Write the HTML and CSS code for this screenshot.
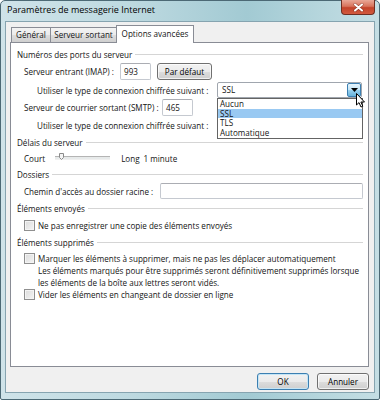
FILE: index.html
```html
<!DOCTYPE html>
<html lang="fr">
<head>
    <meta charset="UTF-8">
    <title>Paramètres de messagerie Internet</title>
    <link rel="stylesheet" href="styles.css">
</head>
<body>

<div class="window">
    <div class="titlebar">
        <span class="title">Paramètres de messagerie Internet</span>
        <div class="close">
            <svg width="11" height="9" viewBox="0 0 11 9">
                <path d="M2 1.5 L9 7.5 M9 1.5 L2 7.5" stroke="#5a1a10" stroke-width="3" stroke-linecap="round" opacity="0.5"/>
                <path d="M2 1.5 L9 7.5 M9 1.5 L2 7.5" stroke="#fff" stroke-width="2" stroke-linecap="round"/>
            </svg>
        </div>
    </div>

    <div class="client">
        <div class="tabs">
            <div class="tab tab-general">Général</div>
            <div class="tab tab-out">Serveur sortant</div>
            <div class="tab tab-adv active">Options avancées</div>
        </div>

        <div class="panel">
            <div class="group g-ports">Numéros des ports du serveur</div>

            <div class="row r-imap">
                <span class="lbl w-imap">Serveur entrant (IMAP) :</span>
                <div class="field port">993</div>
                <div class="btn btn-small">Par défaut</div>
            </div>
            <div class="row sub r-enc">
                <span class="lbl w-enc">Utiliser le type de connexion chiffrée suivant :</span>
                <div class="combo">
                    <span class="combo-text">SSL</span>
                    <span class="combo-arrow">
                        <svg width="7" height="4" viewBox="0 0 7 4"><path d="M0 0 H7 L3.5 4 Z" fill="#000"/></svg>
                    </span>
                </div>
            </div>
            <div class="row r-smtp">
                <span class="lbl w-smtp">Serveur de courrier sortant (SMTP) :</span>
                <div class="field port">465</div>
            </div>
            <div class="row sub r-enc2">
                <span class="lbl w-enc">Utiliser le type de connexion chiffrée suivant :</span>
                <div class="combo"></div>
            </div>

            <div class="group g-delay">Délais du serveur</div>
            <div class="row r-court">
                <span>Court</span>
                <div class="slider">
                    <svg class="thumb" width="5" height="7" viewBox="0 0 5 7">
                        <path d="M0.5 0.5 H4.5 V4.5 L2.5 6.5 L0.5 4.5 Z" fill="#f4f4f4" stroke="#8a8a8a"/>
                    </svg>
                </div>
                <span class="long">Long</span>
                <span class="minute">1 minute</span>
            </div>

            <div class="group g-folders">Dossiers</div>
            <div class="row r-path">
                <span class="lbl w-path">Chemin d'accès au dossier racine :</span>
                <div class="field wide"></div>
            </div>

            <div class="group g-sent">Éléments envoyés</div>
            <div class="row r-cb1">
                <span class="check"></span>
                <span>Ne pas enregistrer une copie des éléments envoyés</span>
            </div>

            <div class="group g-deleted">Éléments supprimés</div>
            <div class="row r-cb2">
                <span class="check"></span>
                <span>Marquer les éléments à supprimer, mais ne pas les déplacer automatiquement</span>
            </div>
            <p class="note">Les éléments marqués pour être supprimés seront définitivement supprimés lorsque<br>les éléments de la boîte aux lettres seront vidés.</p>
            <div class="row r-cb3">
                <span class="check"></span>
                <span>Vider les éléments en changeant de dossier en ligne</span>
            </div>

            <ul class="dropdown">
                <li>Aucun</li>
                <li class="selected">SSL</li>
                <li>TLS</li>
                <li>Automatique</li>
            </ul>

            <svg class="cursor" width="10" height="15" viewBox="0 0 10 15">
                <path d="M0.5 0.5 V12 L3 9.6 L5 14 L6.8 13.2 L4.9 9 H8.5 Z" fill="#fff" stroke="#000" stroke-width="1" stroke-linejoin="round"/>
            </svg>
        </div>

        <div class="actions">
            <div class="btn btn-default">OK</div>
            <div class="btn">Annuler</div>
        </div>
    </div>
</div>

</body>
</html>
```

FILE: styles.css
```css
body {
    margin: 0;
    font-family: "Open Sans", "Noto Sans", sans-serif;
    font-size: 8.1px;
    color: #141414;
    white-space: nowrap;
}
.window {
    width: 380px;
    height: 400px;
    box-sizing: border-box;
    border: 1px solid #4c6975;
    border-radius: 5px 5px 2px 2px;
    padding: 0 4px 6px;
    background: linear-gradient(90deg, #cfe3e9 0%, #bdd9e0 35%, #a2cad3 65%, #b6d6dd 85%, #c5dee4 100%);
    display: flex;
    flex-direction: column;
}
.titlebar {
    height: 20px;
    display: flex;
    align-items: flex-start;
    padding-left: 2px;
}
.title {
    font-size: 9px;
    color: #000;
    line-height: 14px;
    margin-top: 2px;
}
.close {
    margin-left: auto;
    margin-top: -1px;
    width: 34px;
    height: 15px;
    box-sizing: border-box;
    border: 1px solid #6e2e22;
    border-top: none;
    border-radius: 0 0 4px 4px;
    background: linear-gradient(#e9a897 0%, #d8735c 45%, #c3432a 55%, #d25a3f 100%);
    display: flex;
    align-items: center;
    justify-content: center;
}
.client {
    flex: 1;
    border: 1px solid #86a4b0;
    background: #f0f0f0;
    padding: 3px 5px 0 4px;
    display: flex;
    flex-direction: column;
}
.tabs {
    display: flex;
    align-items: flex-end;
    height: 17px;
    padding-left: 1px;
}
.tab {
    box-sizing: border-box;
    height: 15px;
    border: 1px solid #898c95;
    border-bottom: none;
    border-right: none;
    background: linear-gradient(#f3f3f3 0%, #ebebeb 50%, #dddddd 51%, #cfcfcf 100%);
    text-align: center;
    line-height: 13px;
}
.tab-general { width: 39px; }
.tab-out { width: 66px; }
.tab-adv { width: 78px; }
.tab.active {
    height: 18px;
    margin-bottom: -1px;
    background: #fff;
    border-right: 1px solid #898c95;
    line-height: 16px;
    position: relative;
    z-index: 1;
}
.panel {
    position: relative;
    height: 325px;
    box-sizing: border-box;
    border: 1px solid #898c95;
    background: #fff;
    padding: 3px 5px 0 6px;
}
.group {
    display: flex;
    align-items: center;
    height: 16px;
}
.group::after {
    content: "";
    flex: 1;
    border-top: 1px solid #d5d5d5;
    margin-left: 3px;
}
.g-folders, .g-deleted { height: 17px; }
.g-sent { height: 18px; }
.row {
    display: flex;
    align-items: center;
    padding-left: 7px;
}
.row.sub { padding-left: 20px; }
.r-imap { height: 19px; }
.r-enc, .r-enc2 { height: 18px; }
.r-smtp { height: 17px; }
.r-court { height: 16px; }
.r-path { height: 16px; }
.r-cb1 { height: 17px; }
.r-cb2 { height: 14px; }
.r-cb3 { height: 12px; }
.lbl { flex-shrink: 0; }
.w-imap { width: 96px; }
.w-enc { width: 180px; }
.w-smtp { width: 138px; }
.w-path { width: 136px; }
.field {
    box-sizing: border-box;
    height: 17px;
    border: 1px solid #c5c9d0;
    border-top-color: #abadb3;
    border-radius: 2px;
    background: #fff;
    padding-left: 3px;
    line-height: 15px;
}
.port { width: 31px; }
.wide { flex: 1; height: 16px; }
.btn {
    box-sizing: border-box;
    width: 52px;
    height: 17px;
    border: 1px solid #707070;
    border-radius: 3px;
    background: linear-gradient(#f2f2f2 0%, #ebebeb 50%, #dddddd 51%, #cfcfcf 100%);
    box-shadow: inset 0 0 0 1px rgba(255, 255, 255, 0.7);
    text-align: center;
    line-height: 15px;
    color: #000;
}
.btn-small {
    width: 55px;
    margin-left: 6px;
}
.btn-default {
    border-color: #3c7fb1;
    box-shadow: inset 0 0 0 1px #c4e5f6;
}
.combo {
    position: relative;
    box-sizing: border-box;
    width: 145px;
    height: 16px;
    border: 1px solid #a0a6ae;
    border-radius: 2px;
    background: #fff;
}
.combo-text {
    line-height: 14px;
    padding-left: 4px;
}
.combo-arrow {
    position: absolute;
    right: 0;
    top: 0;
    width: 14px;
    height: 14px;
    box-sizing: border-box;
    border: 1px solid #3c7fb1;
    border-radius: 2px;
    background: linear-gradient(#e5f4fc 0%, #c4e5f6 50%, #98d1ef 51%, #68b3db 100%);
    display: flex;
    align-items: center;
    justify-content: center;
}
.slider {
    position: relative;
    width: 55px;
    height: 2px;
    margin-left: 10px;
    border-top: 1px solid #b4b4b4;
    border-bottom: 1px solid #f0f0f0;
    background: #e7eaea;
}
.thumb {
    position: absolute;
    left: 4px;
    top: -4px;
}
.long { margin-left: 11px; }
.minute { margin-left: 4px; }
.check {
    box-sizing: border-box;
    width: 11px;
    height: 11px;
    margin-right: 3px;
    border: 1px solid #8f8f8f;
    background: linear-gradient(135deg, #dcdcdc 0%, #f4f4f4 100%);
    box-shadow: inset 0 0 0 1px #f4f4f4;
}
.note {
    margin: 0;
    padding-left: 21px;
    height: 23px;
    line-height: 11.5px;
}
.actions {
    display: flex;
    justify-content: flex-end;
    gap: 8px;
    padding-top: 6px;
}
.dropdown {
    position: absolute;
    left: 206px;
    top: 55px;
    width: 146px;
    height: 41px;
    box-sizing: border-box;
    margin: 0;
    padding: 0;
    list-style: none;
    border: 1px solid #646464;
    background: #fff;
    z-index: 2;
}
.dropdown li {
    height: 9.5px;
    line-height: 9.5px;
    padding-left: 2px;
}
.dropdown li.selected {
    background: #99c9f2;
}
.cursor {
    position: absolute;
    left: 345px;
    top: 50px;
    z-index: 3;
}
```
